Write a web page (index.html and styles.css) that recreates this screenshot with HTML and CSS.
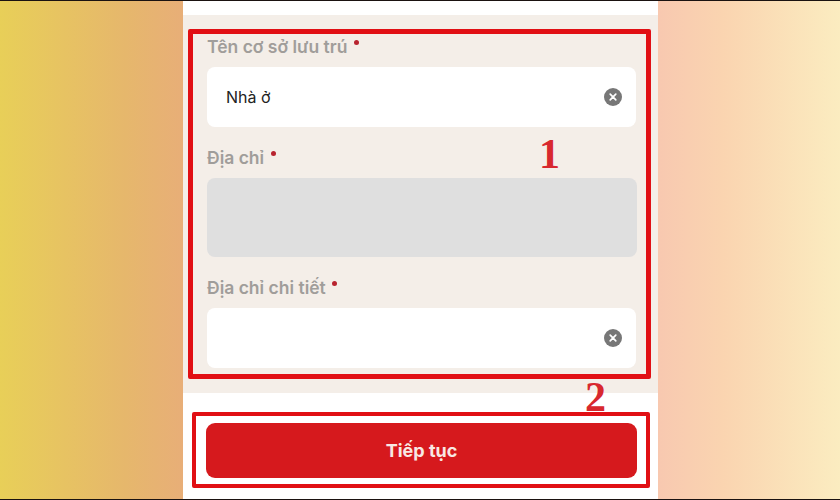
FILE: index.html
```html
<!DOCTYPE html>
<html lang="vi">

<head>
    <meta charset="UTF-8">
    <meta name="viewport" content="width=device-width, initial-scale=1.0">
    <title>Tiếp tục</title>
    <link rel="stylesheet" href="styles.css">
</head>

<body>
    <div class="phone">
        <div class="form">
            <div class="field">
                <div class="label">Tên cơ sở lưu trú <span class="req"></span></div>
                <div class="input">
                    <span>Nhà ở</span>
                    <svg class="clear" viewBox="0 0 18 18">
                        <circle cx="9" cy="9" r="9" fill="#777"/>
                        <path d="M6.2 6.2l5.6 5.6M11.8 6.2l-5.6 5.6" stroke="#fff" stroke-width="1.7" stroke-linecap="round"/>
                    </svg>
                </div>
            </div>
            <div class="field">
                <div class="label">Địa chỉ <span class="req"></span></div>
                <div class="input disabled"></div>
            </div>
            <div class="field">
                <div class="label">Địa chỉ chi tiết <span class="req"></span></div>
                <div class="input">
                    <span></span>
                    <svg class="clear" viewBox="0 0 18 18">
                        <circle cx="9" cy="9" r="9" fill="#777"/>
                        <path d="M6.2 6.2l5.6 5.6M11.8 6.2l-5.6 5.6" stroke="#fff" stroke-width="1.7" stroke-linecap="round"/>
                    </svg>
                </div>
            </div>
        </div>
        <div class="footer">
            <button class="next">Tiếp tục</button>
        </div>

        <!-- red marks drawn over the screenshot -->
        <div class="mark mark-form"></div>
        <div class="mark mark-button"></div>
        <div class="num num-1">1</div>
        <div class="num num-2">2</div>
    </div>
</body>

</html>
```

FILE: styles.css
```css
html,
body {
    height: 100%;
}

body {
    margin: 0;
    height: 500px;
    overflow: hidden;
    box-sizing: border-box;
    border-top: 1px solid #1a1210;
    border-bottom: 1px solid #1a1210;
    background: linear-gradient(to right, #e8cf58 0%, #e6b76c 15%, #e8ae78 22%, #f8c8b0 78%, #fad4b0 86%, #fbecc0 100%);
    font-family: Inter, "Noto Sans", sans-serif;
}

.phone {
    position: relative;
    width: 475px;
    height: 498px;
    margin-left: 183px;
    padding-top: 14px;
    box-sizing: border-box;
    background-color: #fff;
}

.form {
    display: flex;
    flex-direction: column;
    gap: 17px;
    height: 378px;
    padding: 18px 22px 0 24px;
    box-sizing: border-box;
    background-color: #f4eee8;
}

.label {
    height: 34px;
    font-size: 17.5px;
    font-weight: 600;
    line-height: 27px;
    color: #a09d9a;
}

.req {
    display: inline-block;
    width: 5px;
    height: 5px;
    margin-left: 2px;
    border-radius: 50%;
    background-color: #b8232f;
    vertical-align: 8px;
}

.input {
    display: flex;
    align-items: center;
    justify-content: space-between;
    height: 60px;
    padding: 0 14px 0 19px;
    box-sizing: border-box;
    border-radius: 8px;
    background-color: #fff;
    font-size: 16px;
    color: #222;
}

.input.disabled {
    height: 79px;
    margin-right: -1px;
    background-color: #dfdfdf;
}

.clear {
    width: 18px;
    height: 18px;
}

.footer {
    padding: 30px 21px 0 23px;
}

.next {
    display: block;
    width: 431px;
    height: 55px;
    border: none;
    border-radius: 9px;
    background-color: #d6191d;
    font-family: inherit;
    font-size: 18px;
    font-weight: 700;
    color: #f8e8e4;
}

.mark {
    position: absolute;
    box-sizing: border-box;
    border: 4px solid #e10f14;
    border-radius: 2px;
}

.mark-form {
    left: 5px;
    top: 28px;
    width: 463px;
    height: 350px;
    border-width: 5px;
}

.mark-button {
    left: 9px;
    top: 411px;
    width: 458px;
    height: 76px;
}

.num {
    position: absolute;
    font-family: "Liberation Serif", serif;
    font-size: 42px;
    font-weight: 700;
    line-height: 42px;
    color: #d8282e;
}

.num-1 {
    left: 356px;
    top: 132px;
}

.num-2 {
    left: 402px;
    top: 375px;
}
```
